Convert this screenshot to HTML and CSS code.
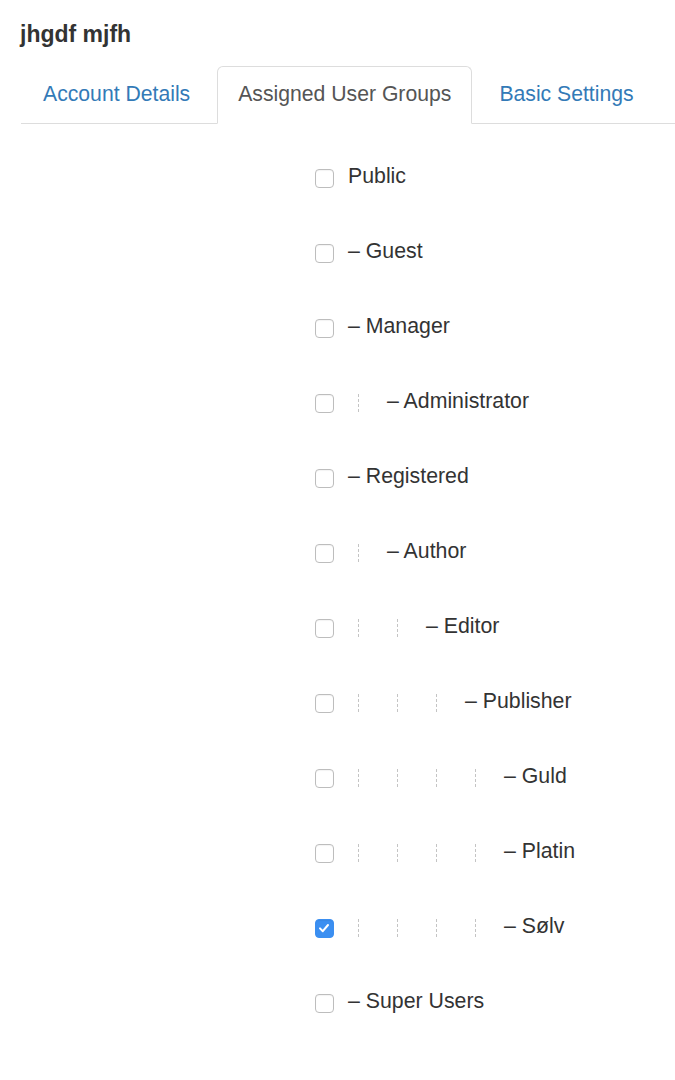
FILE: index.html
```html
<!DOCTYPE html>
<html lang="en">
<head>
  <meta charset="UTF-8">
  <title>jhgdf mjfh</title>
  <meta name="viewport" content="width=device-width, initial-scale=1.0">
  <link rel="stylesheet" href="styles.css">
</head>
<body>
  <div class="page">
    <h2 class="user-name">jhgdf mjfh</h2>

    <ul class="tabs">
      <li><a href="#details">Account Details</a></li>
      <li class="active"><a href="#groups">Assigned User Groups</a></li>
      <li><a href="#settings">Basic Settings</a></li>
    </ul>

    <div class="groups">
      <label class="group"><span class="box"></span><span class="name">Public</span></label>
      <label class="group"><span class="box"></span><span class="name">– Guest</span></label>
      <label class="group"><span class="box"></span><span class="name">– Manager</span></label>
      <label class="group"><span class="box"></span><span class="lvl"></span><span class="name">– Administrator</span></label>
      <label class="group"><span class="box"></span><span class="name">– Registered</span></label>
      <label class="group"><span class="box"></span><span class="lvl"></span><span class="name">– Author</span></label>
      <label class="group"><span class="box"></span><span class="lvl"></span><span class="lvl"></span><span class="name">– Editor</span></label>
      <label class="group"><span class="box"></span><span class="lvl"></span><span class="lvl"></span><span class="lvl"></span><span class="name">– Publisher</span></label>
      <label class="group"><span class="box"></span><span class="lvl"></span><span class="lvl"></span><span class="lvl"></span><span class="lvl"></span><span class="name">– Guld</span></label>
      <label class="group"><span class="box"></span><span class="lvl"></span><span class="lvl"></span><span class="lvl"></span><span class="lvl"></span><span class="name">– Platin</span></label>
      <label class="group"><span class="box checked"><svg viewBox="0 0 18 18" width="18" height="18"><path d="M5 9.4 L7.8 12.2 L13 6" fill="none" stroke="#fff" stroke-width="2" stroke-linecap="round" stroke-linejoin="round"/></svg></span><span class="lvl"></span><span class="lvl"></span><span class="lvl"></span><span class="lvl"></span><span class="name">– Sølv</span></label>
      <label class="group"><span class="box"></span><span class="name">– Super Users</span></label>
    </div>
  </div>
</body>
</html>
```

FILE: styles.css
```css
body {
  font-family: "Liberation Sans", Arial, sans-serif;
  color: #333;
  background: #fff;
  margin: 0;
  padding: 0;
}
.page {
  padding: 22px 0 0 21px;
}
.user-name {
  margin: 0 0 20px -1px;
  font-size: 23px;
  line-height: 24px;
  font-weight: bold;
  color: #333;
}
.tabs {
  list-style: none;
  margin: 0;
  padding: 0;
  display: flex;
  border-bottom: 1px solid #ddd;
}
.tabs li {
  margin-bottom: -1px;
  margin-right: 6px;
}
.tabs a {
  display: block;
  padding: 15px 20px 17px;
  line-height: 24px;
  font-size: 21.2px;
  color: #337ab7;
  text-decoration: none;
  border: 1px solid transparent;
  border-radius: 6px 6px 0 0;
}
.tabs li:first-child a {
  padding-left: 21px;
}
.tabs .active a {
  color: #555;
  border-color: #ddd;
  border-bottom-color: #fff;
  background: #fff;
}
.groups {
  padding: 15px 0 0 294px;
  display: flex;
  flex-direction: column;
}
.group {
  display: flex;
  align-items: center;
  height: 75px;
  font-size: 21.3px;
  color: #333;
}
.box {
  width: 17px;
  height: 17px;
  border: 1px solid #bdbdbd;
  border-radius: 4px;
  margin: 4px 14px 0 0;
  flex: none;
  display: flex;
  box-shadow: inset 0 1px 1px rgba(0,0,0,0.05);
}
.box.checked {
  background: #3b8ff1;
  border-color: #3b8ff1;
}
.box svg {
  margin: -1px;
}
.lvl {
  width: 39px;
  height: 20px;
  flex: none;
  position: relative;
}
.lvl::before {
  content: "";
  position: absolute;
  left: 10px;
  top: 2px;
  width: 1px;
  height: 20px;
  background: repeating-linear-gradient(to bottom, #c4c4c4 0 3px, transparent 3px 5px);
}
```
